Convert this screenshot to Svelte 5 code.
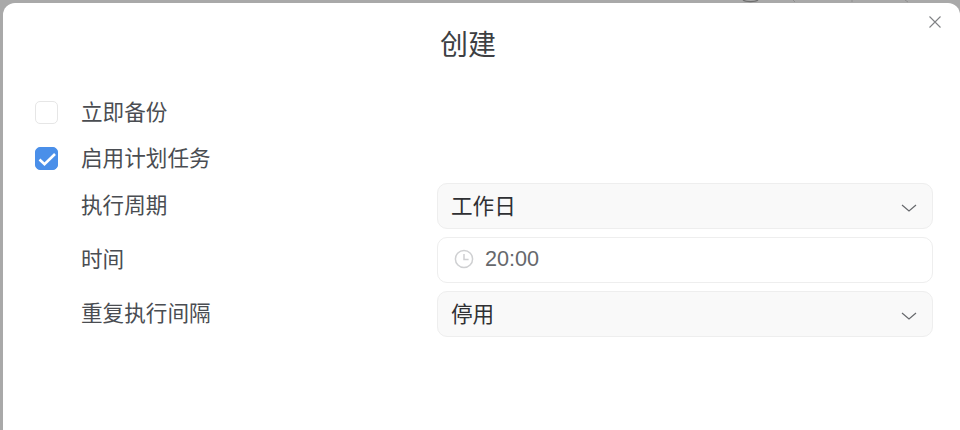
<script>
  let backupNow = $state(false);
  let scheduled = $state(true);

  const fields = [
    { label: "执行周期", value: "工作日", type: "select" },
    { label: "时间", value: "20:00", type: "time" },
    { label: "重复执行间隔", value: "停用", type: "select" },
  ];
</script>

<div class="backdrop">
  <!-- bottom edge of the page toolbar, dimmed behind the dialog -->
  <svg class="behind" viewBox="0 0 960 3" width="960" height="3">
    <path class="ring" d="M743 0a8 2.4 0 0 0 15 0" />
    <path class="faint" d="M793 0l2 2M852 0v2M905 0l3 2" />
  </svg>
  <div class="modal">
    <button class="close" aria-label="关闭">
      <svg viewBox="0 0 14 14" width="14" height="14">
        <path d="M1.5 1.5l11 11M12.5 1.5l-11 11" />
      </svg>
    </button>
    <h2>创建</h2>

    <div class="form">
      <label class="check-row">
        <input type="checkbox" bind:checked={backupNow} />
        <span class="box" class:on={backupNow}></span>
        <span class="text">立即备份</span>
      </label>
      <label class="check-row second">
        <input type="checkbox" bind:checked={scheduled} />
        <span class="box" class:on={scheduled}>
          {#if scheduled}
            <svg viewBox="0 0 24 24" width="24" height="24">
              <path d="M4.5 12.5l5 4.6L20 7" />
            </svg>
          {/if}
        </span>
        <span class="text">启用计划任务</span>
      </label>

      <div class="fields">
        {#each fields as field}
          <div class="field">
            <span class="text label">{field.label}</span>
            {#if field.type === "select"}
              <div class="control select">
                <span class="text value">{field.value}</span>
                <svg class="chevron" viewBox="0 0 16 8" width="16" height="8">
                  <path d="M1 1l7 6 7-6" />
                </svg>
              </div>
            {:else}
              <div class="control time">
                <svg class="clock" viewBox="0 0 20 20" width="20" height="20">
                  <circle cx="10" cy="10" r="8.6" />
                  <path d="M10 5v5.4h4.6" />
                </svg>
                <span class="clock-value">{field.value}</span>
              </div>
            {/if}
          </div>
        {/each}
      </div>
    </div>
  </div>
</div>

<style>
  :global(body) {
    margin: 0;
    background: #a9a9a9;
  }
  .backdrop {
    position: relative;
    height: 430px;
    overflow: hidden;
    padding: 3px 0 0 3px;
    box-sizing: border-box;
    background: #a9a9a9;
    font-family: "Liberation Sans", "Noto Sans CJK SC", sans-serif;
  }
  .behind {
    position: absolute;
    top: 0;
    left: 0;
  }
  .behind path {
    fill: none;
  }
  .ring {
    stroke: #6f6f6f;
    stroke-width: 1.2;
  }
  .faint {
    stroke: #8f8f8f;
    stroke-width: 1;
  }
  .modal {
    position: relative;
    height: 460px;
    background: #fff;
    border-radius: 12px 12px 0 0;
    color: #4a4d52;
  }
  h2 {
    margin: 0;
    padding-top: 22px;
    padding-right: 27px;
    height: 41px;
    line-height: 41px;
    text-align: center;
    font-size: 28px;
    font-weight: 400;
    color: #3d3f43;
  }
  .close {
    position: absolute;
    top: 12px;
    right: 18px;
    padding: 0;
    border: none;
    background: none;
    line-height: 0;
  }
  .close path {
    fill: none;
    stroke: #808285;
    stroke-width: 1.1;
  }
  .form {
    padding: 30px 27px 0 31.5px;
    font-size: 21.6px;
  }
  .check-row {
    display: flex;
    align-items: center;
    gap: 23.5px;
    height: 32px;
  }
  .second {
    margin-top: 14px;
  }
  .check-row input {
    display: none;
  }
  .text {
    padding-bottom: 4px;
  }
  .box {
    flex: none;
    width: 23px;
    height: 23px;
    box-sizing: border-box;
    border: 1px solid #e6e6e6;
    border-radius: 5px;
    background: #fff;
  }
  .box.on {
    border-color: #4a8fe9;
    background: #4a8fe9;
  }
  .box svg {
    display: block;
    margin: -1px;
  }
  .box path {
    fill: none;
    stroke: #fff;
    stroke-width: 2.6;
  }
  .fields {
    display: flex;
    flex-direction: column;
    gap: 8px;
    margin-top: 9px;
    padding-left: 46.5px;
  }
  .field {
    display: grid;
    grid-template-columns: 356px 1fr;
    align-items: center;
  }
  .label {
    padding-bottom: 6px;
  }
  .control {
    display: flex;
    align-items: center;
    height: 46px;
    box-sizing: border-box;
    padding: 0 14px 0 13px;
    border: 1px solid #eeeeee;
    border-radius: 10px;
    color: #2f3033;
  }
  .select {
    justify-content: space-between;
    background: #f9f9f9;
  }
  .time {
    gap: 11px;
    padding-left: 16px;
    background: #fff;
    color: #66686c;
  }
  .clock-value {
    padding-bottom: 2px;
  }
  .chevron {
    margin-top: 4px;
    margin-right: 1px;
  }
  .chevron path {
    fill: none;
    stroke: #66686c;
    stroke-width: 1.2;
  }
  .clock {
    flex: none;
    margin-bottom: 2px;
  }
  .clock circle,
  .clock path {
    fill: none;
    stroke: #cfd0d2;
    stroke-width: 1.5;
  }
</style>
